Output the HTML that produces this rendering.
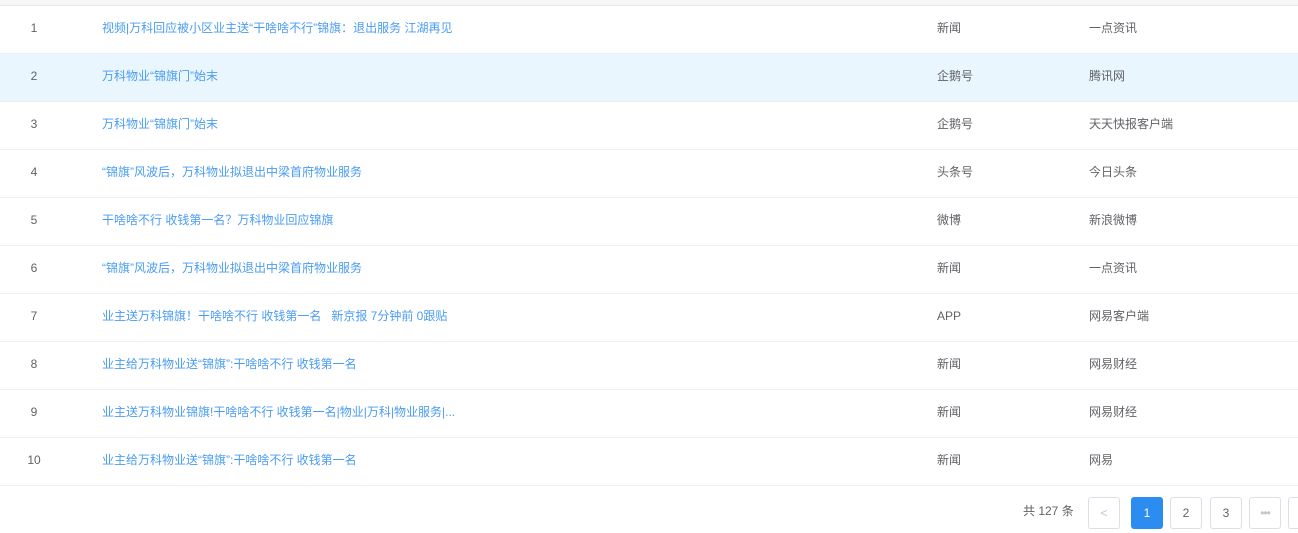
<!DOCTYPE html><html><head><meta charset="utf-8"><style>
body{margin:0;width:1298px;height:533px;overflow:hidden;background:#fff;font-family:"Liberation Sans","Noto Sans CJK SC",sans-serif;font-size:12px;color:#606266}
.top{height:5px;background:#f5f6f7;border-bottom:1px solid #e6e6e6}
.r{height:47px;border-bottom:1px solid #ebeef5;position:relative}
.r.h{background:#e9f6fe}
.r span{position:absolute;top:14px;line-height:16px}
.n{left:0;width:68px;text-align:center}
.t{left:102px;color:#4a9cf2}
.c{left:937px}.s{left:1089px}
.pg{position:absolute;top:497px;height:30px;width:30px;border:1px solid #dcdfe6;border-radius:3px;text-align:center;line-height:30px;font-size:12px;color:#606266;background:#fff}
</style></head><body>
<div class="top"></div>
<div class="r"><span class="n">1</span><span class="t">视频|万科回应被小区业主送“干啥啥不行”锦旗：退出服务 江湖再见</span><span class="c">新闻</span><span class="s">一点资讯</span></div>
<div class="r h"><span class="n">2</span><span class="t">万科物业“锦旗门”始末</span><span class="c">企鹅号</span><span class="s">腾讯网</span></div>
<div class="r"><span class="n">3</span><span class="t">万科物业“锦旗门”始末</span><span class="c">企鹅号</span><span class="s">天天快报客户端</span></div>
<div class="r"><span class="n">4</span><span class="t">“锦旗”风波后，万科物业拟退出中梁首府物业服务</span><span class="c">头条号</span><span class="s">今日头条</span></div>
<div class="r"><span class="n">5</span><span class="t">干啥啥不行 收钱第一名？万科物业回应锦旗</span><span class="c">微博</span><span class="s">新浪微博</span></div>
<div class="r"><span class="n">6</span><span class="t">“锦旗”风波后，万科物业拟退出中梁首府物业服务</span><span class="c">新闻</span><span class="s">一点资讯</span></div>
<div class="r"><span class="n">7</span><span class="t">业主送万科锦旗！干啥啥不行 收钱第一名&nbsp;&nbsp; 新京报 7分钟前 0跟贴</span><span class="c">APP</span><span class="s">网易客户端</span></div>
<div class="r"><span class="n">8</span><span class="t">业主给万科物业送“锦旗”:干啥啥不行 收钱第一名</span><span class="c">新闻</span><span class="s">网易财经</span></div>
<div class="r"><span class="n">9</span><span class="t">业主送万科物业锦旗!干啥啥不行 收钱第一名|物业|万科|物业服务|...</span><span class="c">新闻</span><span class="s">网易财经</span></div>
<div class="r"><span class="n">10</span><span class="t">业主给万科物业送“锦旗”:干啥啥不行 收钱第一名</span><span class="c">新闻</span><span class="s">网易</span></div>
<div style="position:absolute;left:1023px;top:503px;line-height:16px">共 127 条</div>
<div class="pg" style="left:1088px;color:#c0c4cc">&lt;</div>
<div class="pg" style="left:1131px;background:#2d8cf0;border-color:#2d8cf0;color:#fff">1</div>
<div class="pg" style="left:1170px">2</div>
<div class="pg" style="left:1210px">3</div>
<div class="pg" style="left:1249px;color:#c0c4cc;letter-spacing:-1px">•••</div>
<div class="pg" style="left:1288px"></div>
</body></html>
